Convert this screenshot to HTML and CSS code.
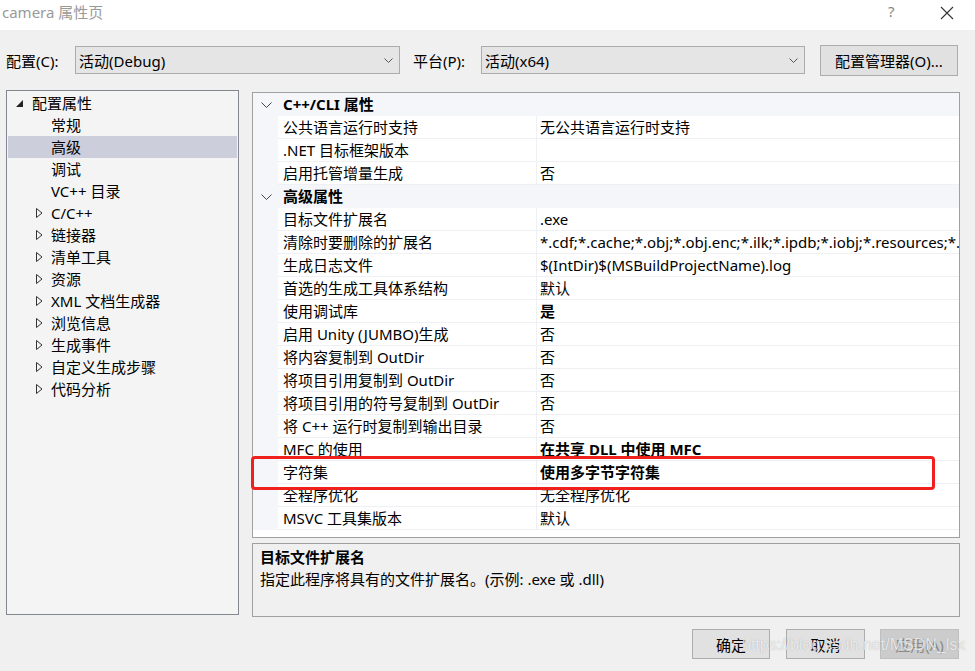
FILE: index.html
```html
<!DOCTYPE html>
<html lang="zh">
<head>
<meta charset="utf-8">
<title>camera 属性页</title>
<link rel="stylesheet" href="styles.css">
</head>
<body>
<div class="window">
  <div class="titlebar">
    <span class="title">camera 属性页</span>
    <span class="tb-help">?</span>
    <span class="tb-close"><svg width="14" height="14" viewBox="0 0 14 14"><path d="M1 1L13 13M13 1L1 13" stroke="#333" stroke-width="1.1" fill="none"/></svg></span>
  </div>

  <div class="toolbar">
    <span class="lbl lbl-config">配置(C):</span>
    <div class="select sel-config"><span>活动(Debug)</span><svg class="chev" width="9" height="5" viewBox="0 0 9 5"><path d="M0.5 0.5L4.5 4.5L8.5 0.5" stroke="#555" fill="none"/></svg></div>
    <span class="lbl lbl-platform">平台(P):</span>
    <div class="select sel-platform"><span>活动(x64)</span><svg class="chev" width="9" height="5" viewBox="0 0 9 5"><path d="M0.5 0.5L4.5 4.5L8.5 0.5" stroke="#555" fill="none"/></svg></div>
    <button class="btn btn-manager">配置管理器(O)...</button>
  </div>

  <div class="main">
    <div class="tree">
      <div class="node l0"><svg class="tri" width="7" height="7" viewBox="0 0 7 7"><path d="M7 0V7H0Z" fill="#222"/></svg><span>配置属性</span></div>
      <div class="node l1"><span>常规</span></div>
      <div class="node l1 sel"><span>高级</span></div>
      <div class="node l1"><span>调试</span></div>
      <div class="node l1"><span>VC++ 目录</span></div>
      <div class="node l1c"><svg class="tri2" width="7" height="10" viewBox="0 0 7 10"><path d="M0.5 0.5V9.5L6 5Z" stroke="#333" fill="none"/></svg><span>C/C++</span></div>
      <div class="node l1c"><svg class="tri2" width="7" height="10" viewBox="0 0 7 10"><path d="M0.5 0.5V9.5L6 5Z" stroke="#333" fill="none"/></svg><span>链接器</span></div>
      <div class="node l1c"><svg class="tri2" width="7" height="10" viewBox="0 0 7 10"><path d="M0.5 0.5V9.5L6 5Z" stroke="#333" fill="none"/></svg><span>清单工具</span></div>
      <div class="node l1c"><svg class="tri2" width="7" height="10" viewBox="0 0 7 10"><path d="M0.5 0.5V9.5L6 5Z" stroke="#333" fill="none"/></svg><span>资源</span></div>
      <div class="node l1c"><svg class="tri2" width="7" height="10" viewBox="0 0 7 10"><path d="M0.5 0.5V9.5L6 5Z" stroke="#333" fill="none"/></svg><span>XML 文档生成器</span></div>
      <div class="node l1c"><svg class="tri2" width="7" height="10" viewBox="0 0 7 10"><path d="M0.5 0.5V9.5L6 5Z" stroke="#333" fill="none"/></svg><span>浏览信息</span></div>
      <div class="node l1c"><svg class="tri2" width="7" height="10" viewBox="0 0 7 10"><path d="M0.5 0.5V9.5L6 5Z" stroke="#333" fill="none"/></svg><span>生成事件</span></div>
      <div class="node l1c"><svg class="tri2" width="7" height="10" viewBox="0 0 7 10"><path d="M0.5 0.5V9.5L6 5Z" stroke="#333" fill="none"/></svg><span>自定义生成步骤</span></div>
      <div class="node l1c"><svg class="tri2" width="7" height="10" viewBox="0 0 7 10"><path d="M0.5 0.5V9.5L6 5Z" stroke="#333" fill="none"/></svg><span>代码分析</span></div>
    </div>

    <div class="right">
      <div class="grid">
        <div class="cat"><span class="gut"><svg width="11" height="6" viewBox="0 0 11 6"><path d="M0.5 0.5L5.5 5.5L10.5 0.5" stroke="#444" fill="none"/></svg></span><span class="cat-name">C++/CLI 属性</span></div>
        <div class="row"><span class="gut"></span><span class="name">公共语言运行时支持</span><span class="val">无公共语言运行时支持</span></div>
        <div class="row"><span class="gut"></span><span class="name">.NET 目标框架版本</span><span class="val"></span></div>
        <div class="row"><span class="gut"></span><span class="name">启用托管增量生成</span><span class="val">否</span></div>
        <div class="cat"><span class="gut"><svg width="11" height="6" viewBox="0 0 11 6"><path d="M0.5 0.5L5.5 5.5L10.5 0.5" stroke="#444" fill="none"/></svg></span><span class="cat-name">高级属性</span></div>
        <div class="row"><span class="gut"></span><span class="name">目标文件扩展名</span><span class="val">.exe</span></div>
        <div class="row"><span class="gut"></span><span class="name">清除时要删除的扩展名</span><span class="val">*.cdf;*.cache;*.obj;*.obj.enc;*.ilk;*.ipdb;*.iobj;*.resources;*.tlb;*.tli;*.tlh;*.tmp;*.rsp;*.pgc;*.pgd;*.meta;*.tlog;*.manifest;*.res;*.pch;*.exp;*.idb;*.rep;*.xdc;*.pdb;*_manifest.rc;*.bsc;*.sbr;*.xml;*.metagen;*.bi</span></div>
        <div class="row"><span class="gut"></span><span class="name">生成日志文件</span><span class="val">$(IntDir)$(MSBuildProjectName).log</span></div>
        <div class="row"><span class="gut"></span><span class="name">首选的生成工具体系结构</span><span class="val">默认</span></div>
        <div class="row"><span class="gut"></span><span class="name">使用调试库</span><span class="val b">是</span></div>
        <div class="row"><span class="gut"></span><span class="name">启用 Unity (JUMBO)生成</span><span class="val">否</span></div>
        <div class="row"><span class="gut"></span><span class="name">将内容复制到 OutDir</span><span class="val">否</span></div>
        <div class="row"><span class="gut"></span><span class="name">将项目引用复制到 OutDir</span><span class="val">否</span></div>
        <div class="row"><span class="gut"></span><span class="name">将项目引用的符号复制到 OutDir</span><span class="val">否</span></div>
        <div class="row"><span class="gut"></span><span class="name">将 C++ 运行时复制到输出目录</span><span class="val">否</span></div>
        <div class="row"><span class="gut"></span><span class="name">MFC 的使用</span><span class="val b">在共享 DLL 中使用 MFC</span></div>
        <div class="row"><span class="gut"></span><span class="name">字符集</span><span class="val b">使用多字节字符集</span></div>
        <div class="row"><span class="gut"></span><span class="name">全程序优化</span><span class="val">无全程序优化</span></div>
        <div class="row"><span class="gut"></span><span class="name">MSVC 工具集版本</span><span class="val">默认</span></div>
      </div>
      <div class="desc">
        <div class="desc-title">目标文件扩展名</div>
        <div class="desc-text">指定此程序将具有的文件扩展名。(示例: .exe 或 .dll)</div>
      </div>
    </div>
  </div>

  <div class="footer">
    <button class="btn btn-ok">确定</button>
    <button class="btn btn-cancel">取消</button>
    <button class="btn btn-apply" disabled>应用(A)</button>
  </div>

  <div class="highlight"></div>
  <div class="watermark">https://blog.csdn.net/MSDN_lsx</div>
</div>
</body>
</html>
```

FILE: styles.css
```css
* { box-sizing: border-box; }
html, body { margin: 0; padding: 0; }
body {
  font-family: "Noto Sans", "Noto Sans CJK SC", sans-serif;
  font-size: 15px;
  color: #000;
  background: #f0f0f0;
}
.window {
  position: relative;
  width: 975px;
  height: 671px;
  background: #f0f0f0;
  overflow: hidden;
}
.titlebar {
  height: 30px;
  background: #fff;
  display: flex;
  align-items: flex-start;
  padding-left: 2px;
  padding-top: 1px;
}
.title { color: #999; flex: 1; font-size: 15px; line-height: 22px; }
.tb-help { color: #888; font-size: 15px; width: 52px; line-height: 20px; }
.tb-close { width: 35px; display: flex; align-items: center; padding-top: 5px; }

.toolbar {
  height: 60px;
  display: flex;
  align-items: center;
  padding-left: 6px;
}
.lbl { white-space: nowrap; }
.lbl-config { width: 69px; }
.lbl-platform { width: 68px; margin-left: 13px; }
.select {
  height: 28px;
  background: #e5e5e5;
  border: 1px solid #acacac;
  display: flex;
  align-items: center;
  padding-left: 3px;
  padding-right: 6px;
}
.select span { flex: 1; }
.sel-config { width: 325px; }
.sel-platform { width: 324px; }
.btn {
  font-family: inherit;
  font-size: 15px;
  background: #e1e1e1;
  border: 1px solid #adadad;
  color: #000;
  padding: 0;
}
.btn-manager { width: 138px; height: 31px; margin-left: 15px; }

.main {
  display: flex;
  padding-left: 6px;
  gap: 13px;
}
.tree {
  width: 233px;
  height: 525px;
  background: #f4f4f4;
  border: 1px solid #828790;
  padding-top: 1px;
}
.node {
  height: 22px;
  line-height: 22px;
  display: flex;
  align-items: center;
  white-space: nowrap;
}
.node.l0 { padding-left: 9px; }
.node.l0 .tri { margin-right: 9px; margin-top: 1px; }
.node.l1 { padding-left: 44px; }
.node.l1c { padding-left: 29px; }
.node.l1c .tri2 { margin-right: 8px; }
.node.sel { background: #cccedb; margin: 0 1px; padding-left: 43px; }

.right {
  width: 708px;
  display: flex;
  flex-direction: column;
  padding-top: 2px;
  gap: 5px;
}
.grid {
  height: 446px;
  background: #fff;
  border: 1px solid #a0a0a0;
  overflow: hidden;
}
.cat, .row {
  display: flex;
  height: 23px;
  line-height: 23px;
  white-space: nowrap;
}
.cat { background: #f4f6fa; }
.gut {
  width: 25px;
  flex: none;
  background: #f4f6fa;
  display: flex;
  align-items: center;
  justify-content: center;
  padding-left: 2px;
  padding-top: 1px;
}
.cat-name { font-weight: bold; padding-left: 5px; }
.name {
  width: 259px;
  flex: none;
  padding-left: 5px;
  border-bottom: 1px solid #eef0f3;
  border-right: 1px solid #eef0f3;
  overflow: hidden;
}
.val {
  flex: 1;
  padding-left: 3px;
  border-bottom: 1px solid #eef0f3;
  overflow: hidden;
}
.b { font-weight: bold; }

.desc {
  height: 74px;
  border: 1px solid #a0a0a0;
  padding: 2px 7px;
}
.desc-title { font-weight: bold; line-height: 22px; }
.desc-text { line-height: 22px; }

.footer {
  display: flex;
  justify-content: flex-end;
  padding-top: 12px;
  padding-right: 16px;
  gap: 15px;
}
.footer .btn { height: 30px; width: 79px; }
.btn-ok { width: 78px !important; }
.btn-cancel { margin-left: 1px; }
.btn-apply { background: #cccccc; border-color: #bfbfbf; color: #8a8a8a; }

.highlight {
  position: absolute;
  left: 251px;
  top: 456px;
  width: 684px;
  height: 34px;
  border: 3px solid #f0201c;
  border-radius: 4px;
}
.watermark {
  position: absolute;
  left: 742px;
  top: 636px;
  font-family: "Liberation Sans", sans-serif;
  font-size: 16px;
  color: rgba(255,255,255,0.75);
  text-shadow: 0 0 1px rgba(120,120,120,0.6);
  white-space: nowrap;
}
```
